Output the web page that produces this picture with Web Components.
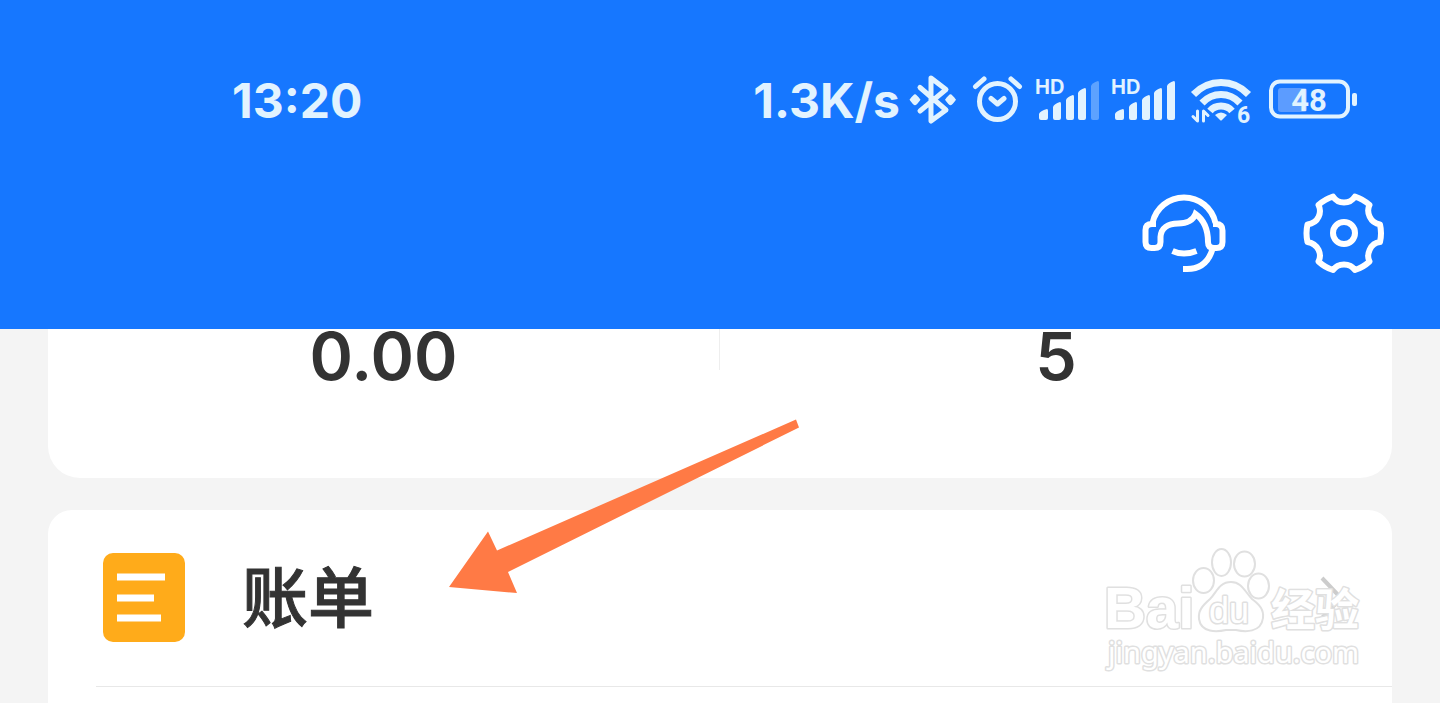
<!DOCTYPE html>
<html lang="zh-CN">
<head>
<meta charset="utf-8">
<meta name="viewport" content="width=device-width, initial-scale=1">
<title>账单</title>
<style>
  html, body { margin: 0; height: 100%; }
  body { background: #f4f4f4; color: #333; font-family: Inter, "Noto Sans CJK SC", sans-serif; overflow-x: hidden; }
</style>
</head>
<body>
<bill-page>
  <app-header slot="header">
    <status-bar slot="status" time="13:20" speed="1.3K/s"></status-bar>
    <icon-button label="客服" kind="service"></icon-button>
    <icon-button label="设置" kind="settings"></icon-button>
  </app-header>
  <summary-card>
    <span slot="first">0.00</span>
    <span slot="second">5</span>
  </summary-card>
  <menu-card><menu-row href="#bills">账单</menu-row></menu-card>
  <pointer-arrow slot="overlay"></pointer-arrow>
</bill-page>

<script>
const define = (name, html, setup) => customElements.define(name, class extends HTMLElement {
  constructor() {
    super();
    const t = document.createElement('template');
    t.innerHTML = html;
    this.attachShadow({ mode: 'open' }).append(t.content.cloneNode(true));
  }
  connectedCallback() { if (setup) setup(this, this.shadowRoot); }
});

define('bill-page', `
  <style>
    :host { display: flex; flex-direction: column; min-height: 100vh; position: relative; }
    main { flex: 1; display: flex; flex-direction: column; gap: 32px; padding: 0 48px; }
    ::slotted(menu-card) { flex: 1; }
    ::slotted(pointer-arrow) { position: absolute; left: 448px; top: 418px; }
  </style>
  <slot name="header"></slot>
  <main><slot></slot></main>
  <slot name="overlay"></slot>`);

define('app-header', `
  <style>
    :host { display: block; background: #1677ff; }
    header { padding: 72px 54px 54px; }
    nav { display: flex; justify-content: flex-end; gap: 76px; padding-top: 63px; }
  </style>
  <header><slot name="status"></slot><nav><slot></slot></nav></header>`);

define('status-bar', `
  <style>
    :host { display: flex; justify-content: space-between; align-items: center; height: 56px;
      padding: 0 28px 0 178px; color: #e2f3ff; font: 700 48px/56px Inter, sans-serif; }
    .right { display: flex; align-items: center; gap: 14px; }
    .time, .speed { padding-top: 2px; }
    svg { display: block; overflow: visible; fill: none; stroke: currentColor; stroke-linecap: round; stroke-linejoin: round; }
    .f { fill: currentColor; stroke: none; }
    text { fill: currentColor; stroke: none; font-family: Inter, sans-serif; font-weight: 700; }
    .num { font-family: Roboto, sans-serif; }
  </style>
  <span class="time"></span>
  <div class="right">
    <span class="speed"></span>
    <svg width="44" height="56" stroke-width="5"><path d="M6 15.500 32 38 17 49V6L32 17.500 6 39"/><path class="f" d="M-4.500 27.700q4-5.500 5.500-5.500t5.500 5.500q-4 5.500-5.500 5.500t-5.500-5.500zM31 27.700q4-5.500 5.500-5.500t5.500 5.500q-4 5.500-5.500 5.500t-5.500-5.500z"/></svg>
    <svg width="50" height="56" stroke-width="5"><circle cx="25.500" cy="29.500" r="18"/><path d="m19 26.500 6.500 5.500 6.500-5.500M3.500 14.500 12 7M39 7 47.500 14.500"/></svg>
    <svg width="62" height="56"><text x="-1" y="22" font-size="20">HD</text><g class="f"><path d="M3 42q1-3 8-5 1 0 1 2v7q0 2-2 2H5q-2 0-2-2zM17 35q1-3 7-5 1 0 1 2v14q0 2-2 2h-4q-2 0-2-2zM30 28q1-3 7-5 1 0 1 2v21q0 2-2 2h-4q-2 0-2-2zM42 21q1-3 7-5 1 0 1 2v28q0 2-2 2h-4q-2 0-2-2z"/><path opacity=".35" d="M55 14q1-3 7-5 1 0 1 2v35q0 2-2 2h-4q-2 0-2-2z"/></g></svg>
    <svg width="62" height="56"><text x="-1" y="22" font-size="20">HD</text><path class="f" d="M3 42q1-3 8-5 1 0 1 2v7q0 2-2 2H5q-2 0-2-2zM17 35q1-3 7-5 1 0 1 2v14q0 2-2 2h-4q-2 0-2-2zM30 28q1-3 7-5 1 0 1 2v21q0 2-2 2h-4q-2 0-2-2zM42 21q1-3 7-5 1 0 1 2v28q0 2-2 2h-4q-2 0-2-2zM55 14q1-3 7-5 1 0 1 2v35q0 2-2 2h-4q-2 0-2-2z"/></svg>
    <svg width="64" height="56"><g stroke-width="7" style="stroke-linecap:butt"><path d="M5.500 22.500Q17 10.500 33 10.500T60.500 22.500M14 31Q22 22.500 33 22.500T52 31M22 39Q26 34 33 34T44 39"/></g><path class="f" d="M27 43q6-5 12 0l-5 5q-1 1-2 0z"/><path stroke-width="3" d="M9.500 39v10L5 44.500M15.500 49V39l4.500 4.500"/><text class="num" x="49" y="51" font-size="23">6</text></svg>
    <svg width="92" height="56"><rect x="5" y="9.500" width="77" height="35" rx="9" stroke-width="4"/><rect x="12" y="16" width="29" height="24" rx="3" fill="#5c9cff" stroke="none"/><rect class="f" x="86" y="21" width="5" height="13" rx="2"/><text class="num" x="43" y="39" font-size="31" text-anchor="middle">48</text></svg>
  </div>`,
  (host, root) => {
    root.querySelector('.time').textContent = host.getAttribute('time');
    root.querySelector('.speed').textContent = host.getAttribute('speed');
  });

const glyphs = {
  service: '<path d="M10.500 32A32.200 32.200 0 0 1 73.500 32M14 33H10q-6.500 0-6.500 6V51q0 6 6 6h3q6 0 6-6v-5C19 37 26 32.500 36 32.500c9 0 15-3 17.500-9.500C62 29 66 38 66 51q0 6 6 6h2.500q6 0 6-6V39.500Q80.500 33 74 33h-3M30.500 60q11 5 24 0M41 78h4c14 0 22-8 25.500-20"/>',
  settings: '<path stroke-linejoin="round" d="M53 5.500A39 39 0 0 1 67.500 14C64 21 68 32 78 33.500A39 39 0 0 1 78 51C68 52 64 64 67.500 70.500A39 39 0 0 1 53 79C48 71.500 36 71.500 31 79A39 39 0 0 1 16.500 70.500C20 64 17 53 5.500 51A39 39 0 0 1 5.500 33.500C17 32 20 21 16.500 14A39 39 0 0 1 31 5.500C36 13.500 48 13.500 53 5.500z"/><circle cx="42" cy="42" r="11"/>'
};
define('icon-button', `
  <style>
    :host { display: block; }
    button { display: block; padding: 0; border: 0; background: none; color: #fff; cursor: pointer; }
    svg { display: block; fill: none; stroke: currentColor; stroke-width: 6; }
  </style>
  <button type="button"><svg width="84" height="84" viewBox="0 0 84 84" aria-hidden="true"></svg></button>`,
  (host, root) => {
    root.querySelector('button').setAttribute('aria-label', host.getAttribute('label'));
    root.querySelector('svg').innerHTML = glyphs[host.getAttribute('kind')];
  });

define('summary-card', `
  <style>
    :host { display: grid; grid-template-columns: 1fr 1fr; background: #fff; border-radius: 0 0 32px 32px;
      padding-bottom: 93px; text-align: center; font: 600 66px/54px Inter, sans-serif; }
    div { height: 56px; }
    .first { height: 41px; border-right: 1px solid #eee; }
  </style>
  <div class="first"><slot name="first"></slot></div>
  <div><slot name="second"></slot></div>`);

define('menu-card', `
  <style>:host { display: block; background: #fff; border-radius: 24px 24px 0 0; }</style>
  <slot></slot>`);

define('menu-row', `
  <style>
    :host { display: block; position: relative; margin-left: 48px; border-bottom: 1px solid #e8e8e8; }
    a { display: flex; align-items: center; height: 176px; padding: 0 48px 0 6px; color: #333; text-decoration: none; }
    .label { flex: 1; margin-left: 56px; padding-bottom: 10px; font: 500 66px/96px "Noto Sans CJK SC", sans-serif; -webkit-text-stroke: 1px #333; }
    svg { display: block; }
    site-watermark { position: absolute; right: 28px; top: 36px; }
  </style>
  <a>
    <svg width="84" height="90" aria-hidden="true"><rect x="1" y="0" width="82" height="89" rx="10" fill="#ffab1a"/><path d="M15 24h48M15 45h37M15 65h44" stroke="#fff" stroke-width="7"/></svg>
    <span class="label"><slot></slot></span>
    <svg width="24" height="44" aria-hidden="true"><path d="m2 2 19 20L2 42" fill="none" stroke="#ccc" stroke-width="4"/></svg>
  </a>
  <site-watermark></site-watermark>`,
  (host, root) => { root.querySelector('a').href = host.getAttribute('href'); });

define('site-watermark', `
  <style>
    :host { display: block; pointer-events: none; }
    svg { display: block; overflow: visible; fill: #fff; stroke: #e0e0e0; stroke-width: 2; stroke-linejoin: round; }
    text { paint-order: stroke; stroke-width: 3; }
  </style>
  <svg width="260" height="130">
    <text x="0" y="82" font-family="Liberation Sans, sans-serif" font-weight="700" font-size="58">Bai</text>
    <g transform="translate(86 0)"><ellipse cx="13.500" cy="34.500" rx="10.500" ry="12.500"/><ellipse cx="31.500" cy="16.500" rx="9.500" ry="13.500"/><ellipse cx="54.500" cy="18" rx="10.500" ry="12.500"/><ellipse cx="68.500" cy="40" rx="10.500" ry="12.500"/><path d="M41 36C52 36 55 46 62 53 70 59 74 64 73 72 71 87 55 86 46 84H36C27 86 11 87 9 73 8 65 12 60 20 53 27 46 29 36 41 36z"/></g>
    <text x="125" y="77" text-anchor="middle" font-family="Liberation Sans, sans-serif" font-size="36">du</text>
    <text x="167" y="80" font-family="Noto Sans CJK SC, sans-serif" font-weight="700" font-size="44">经验</text>
    <text x="4" y="117" font-family="Noto Sans, sans-serif" font-size="29">jingyan.baidu.com</text>
  </svg>`);

define('pointer-arrow', `
  <style>:host { display: block; pointer-events: none; } svg { display: block; }</style>
  <svg width="352" height="176" aria-hidden="true"><path fill="#ff7a45" d="M1 169 40 113.500 49 132.500 348 1.500 351 9.500 60 154 69 175z"/></svg>`);
</script>
</body>
</html>
